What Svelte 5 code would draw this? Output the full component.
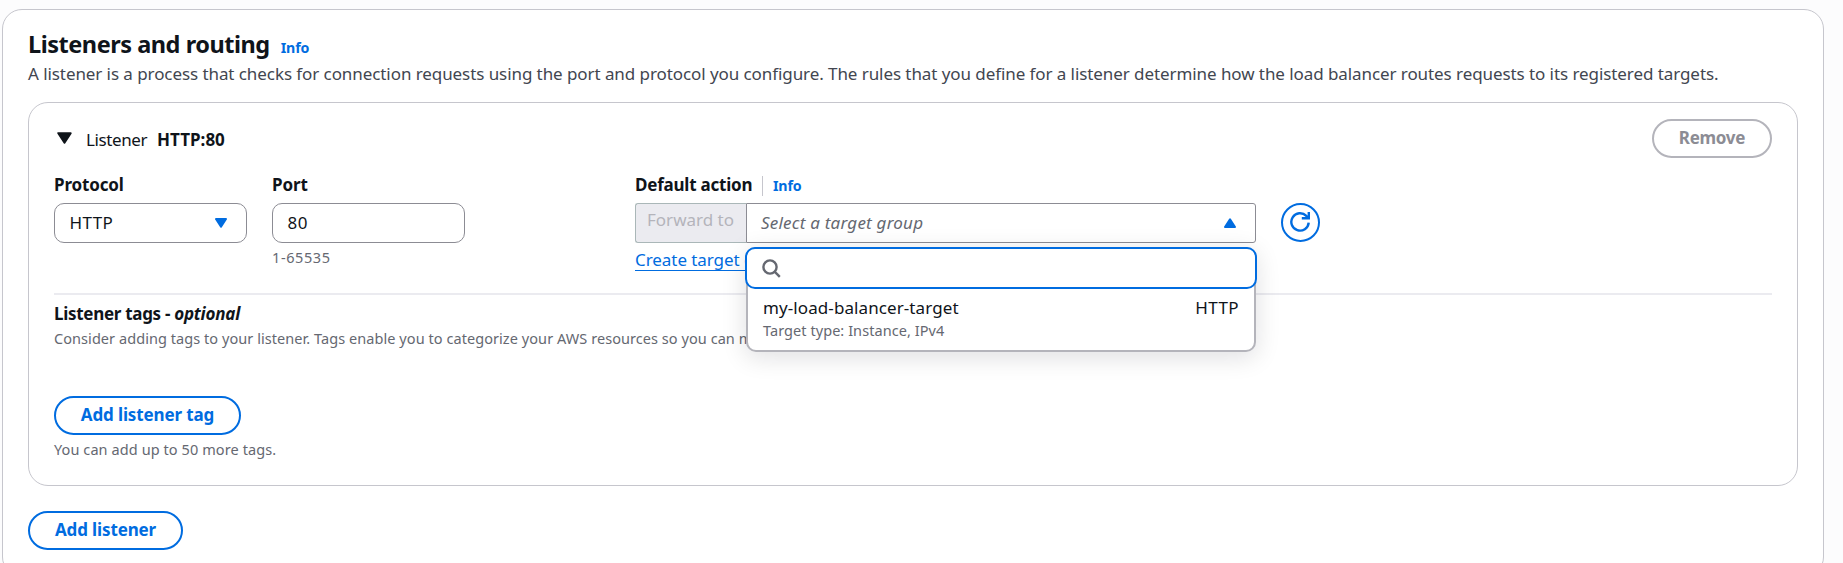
<script>
  let protocol = 'HTTP';
  let port = '80';
  const targets = [
    { name: 'my-load-balancer-target', detail: 'Target type: Instance, IPv4', protocol: 'HTTP' }
  ];
</script>

<section class="card">
  <header class="head">
    <h2>Listeners and routing</h2>
    <a class="info">Info</a>
  </header>
  <p class="desc">A listener is a process that checks for connection requests using the port and protocol you configure. The rules that you define for a listener determine how the load balancer routes requests to its registered targets.</p>

  <div class="listener">
    <div class="listener-head">
      <svg class="caret" width="15" height="13" viewBox="0 0 15 13"><path d="M1.3 1.2h12.4L7.5 10.6z" fill="#0f141a" stroke="#0f141a" stroke-width="2" stroke-linejoin="round" /></svg>
      <span class="kind">Listener</span>
      <strong>HTTP:80</strong>
      <button class="btn disabled">Remove</button>
    </div>

    <div class="fields">
      <div class="field">
        <div class="label protocol">Protocol</div>
        <div class="box">
          <span class="http">{protocol}</span>
          <svg width="12" height="10" viewBox="0 0 12 10"><path d="M1 1h10L6 8.6z" fill="#006ce0" stroke="#006ce0" stroke-width="2" stroke-linejoin="round" /></svg>
        </div>
      </div>
      <div class="field">
        <div class="label">Port</div>
        <div class="box"><span class="digits">{port}</span></div>
        <div class="hint range">1-65535</div>
      </div>
      <div class="field">
        <div class="label-row">
          <div class="label action">Default action</div>
          <i class="bar"></i>
          <a class="info">Info</a>
        </div>
        <div class="action-row">
          <div class="forward">Forward to</div>
          <div class="select">
            <span>Select a target group</span>
            <svg width="12" height="10" viewBox="0 0 12 10"><path d="M1 9h10L6 1.4z" fill="#006ce0" stroke="#006ce0" stroke-width="2" stroke-linejoin="round" /></svg>
            <div class="menu">
              <div class="search">
                <svg width="19" height="19" viewBox="0 0 19 19" fill="none" stroke="#656871" stroke-width="2.4"><circle cx="8" cy="8" r="6.6" /><path d="M12.6 12.6l5.2 5.2" /></svg>
              </div>
              {#each targets as t}
                <div class="option">
                  <div class="line"><span class="name">{t.name}</span><span class="http">{t.protocol}</span></div>
                  <div class="hint detail">{t.detail}</div>
                </div>
              {/each}
            </div>
          </div>
          <button class="refresh" aria-label="Refresh">
            <svg width="20" height="20" viewBox="0 0 20 20" fill="none" stroke="#006ce0" stroke-width="2.4"><path d="M18.7 10.6a8.7 8.7 0 1 1-2.4-6.7l2 2" /><path d="M18.8 0v6.3h-7" /></svg>
          </button>
        </div>
        <a class="create">Create target group</a>
      </div>
    </div>

    <hr />

    <div class="label tags">Listener tags - <em>optional</em></div>
    <div class="hint consider">Consider adding tags to your listener. Tags enable you to categorize your AWS resources so you can manage them.</div>
    <button class="btn add-tag">Add listener tag</button>
    <div class="hint limit">You can add up to 50 more tags.</div>
  </div>

  <button class="btn add-listener">Add listener</button>
</section>

<style>
  :global(body) {
    background: #fcfcfd;
    overflow: hidden;
  }
  .card, .card * { box-sizing: border-box; }
  .card {
    width: 1822px;
    height: 568px;
    margin: 9px 0 0 2px;
    padding: 19px 25px;
    border: 1px solid #c6c6cd;
    border-radius: 20px;
    background: #fff;
    color: #0f141a;
    font: 17px/25px 'Noto Sans', 'Open Sans', sans-serif;
    white-space: nowrap;
  }
  .head { display: flex; gap: 11px; height: 30px; }
  h2 { margin: 0; font-size: 23.5px; line-height: 30px; letter-spacing: -0.47px; }
  .info { color: #006ce0; font-weight: 700; font-size: 14.2px; letter-spacing: -0.15px; line-height: 25px; }
  .head .info { line-height: 34px; padding-top: 2px; }
  .desc { margin: 2px 0 16px; color: #424650; letter-spacing: -0.076px; }
  .listener {
    height: 384px;
    width: 1770px;
    padding: 16px 25px 0;
    border: 1px solid #c6c6cd;
    border-radius: 20px;
  }
  .listener-head { display: flex; align-items: center; height: 39px; }
  .caret { margin: -1px 14px 0 3px; }
  .kind { letter-spacing: -0.4px; margin: 2px 10px 0 0; }
  .listener-head strong { letter-spacing: 0; margin-top: 2px; }
  .btn {
    display: flex;
    align-items: center;
    justify-content: center;
    height: 39px;
    padding: 0 0 3px;
    border: 2px solid #006ce0;
    border-radius: 20px;
    background: #fff;
    color: #006ce0;
    font: 700 17px/25px 'Noto Sans', 'Open Sans', sans-serif;
    letter-spacing: -0.13px;
  }
  .btn.disabled { width: 120px; margin-left: auto; border-color: #b4b4bb; color: #8c8c94; letter-spacing: -0.28px; }
  .fields {
    display: grid;
    grid-template-columns: 193px 193px 685px;
    column-gap: 25px;
    margin-top: 14px;
    height: 100px;
  }
  .field:last-child { margin-left: 145px; }
  .label { font-weight: 700; letter-spacing: -0.06px; height: 25px; margin-bottom: 6px; }
  .label.protocol { letter-spacing: -0.15px; }
  .label.action { letter-spacing: -0.22px; width: 127px; }
  .label-row { display: flex; }
  .label-row .info { padding-top: 1px; }
  .bar { width: 1px; height: 20px; margin: 4px 10px 0 0; background: #c6c6cd; }
  .box {
    display: flex;
    align-items: center;
    justify-content: space-between;
    height: 40px;
    padding: 0 19px 1px 14.5px;
    border: 1px solid #8c8c94;
    border-radius: 10px;
  }
  .http { letter-spacing: 0.4px; }
  .digits { letter-spacing: 0.6px; }
  .hint { color: #656871; font-size: 14.5px; line-height: 20px; letter-spacing: 0.07px; }
  .range { margin-top: 4px; letter-spacing: 0.6px; }
  .action-row { display: flex; width: 685px; height: 40px; }
  .forward {
    width: 111px;
    padding: 3px 0 0 11px;
    border: 1px solid #aab7b8;
    border-right: 0;
    border-radius: 3px 0 0 3px;
    background: #ebebf0;
    color: #b4b4bb;
  }
  .select {
    position: relative;
    display: flex;
    align-items: center;
    justify-content: space-between;
    width: 510px;
    padding: 0 19px 1px 14px;
    border: 1px solid #8c8c94;
    border-radius: 0 3px 3px 0;
    color: #656871;
    font-style: italic;
    letter-spacing: 0.22px;
  }
  .menu {
    position: absolute;
    z-index: 2;
    left: -1px;
    top: 43px;
    width: 510px;
    height: 105px;
    border: 2px solid #b4b4bb;
    border-radius: 10px;
    background: #fff;
    box-shadow: 0 5px 25px 1px rgba(0, 7, 22, 0.12);
    color: #0f141a;
    font-style: normal;
  }
  .search {
    width: 512px;
    height: 42px;
    margin: -2px 0 0 -3px;
    padding: 10px 15px;
    border: 2px solid #006ce0;
    border-radius: 10px;
    background: #fff;
  }
  .search svg { display: block; }
  .option { padding: 6px 15px 0; }
  .line { display: flex; justify-content: space-between; }
  .name { letter-spacing: 0.09px; }
  .detail { letter-spacing: 0.06px; }
  .refresh {
    display: grid;
    place-items: center;
    width: 39px;
    height: 39px;
    margin-left: 25px;
    padding: 0 1px 1px 0;
    border: 2px solid #006ce0;
    border-radius: 50%;
    background: #fff;
  }
  .create {
    display: inline-block;
    height: 24px;
    margin-top: 4px;
    border-bottom: 1px solid #006ce0;
    color: #006ce0;
    letter-spacing: -0.06px;
  }
  hr { height: 2px; margin: 21px 0 6px; border: 0; background: #ebebf0; }
  .tags { height: 25px; margin: 0 0 2px; letter-spacing: -0.3px; }
  .tags em { letter-spacing: -0.2px; }
  .consider { letter-spacing: 0.06px; }
  .add-tag { width: 187px; margin: 48px 0 4px; }
  .limit { letter-spacing: 0.09px; }
  .add-listener { width: 155px; margin-top: 25px; }
</style>
